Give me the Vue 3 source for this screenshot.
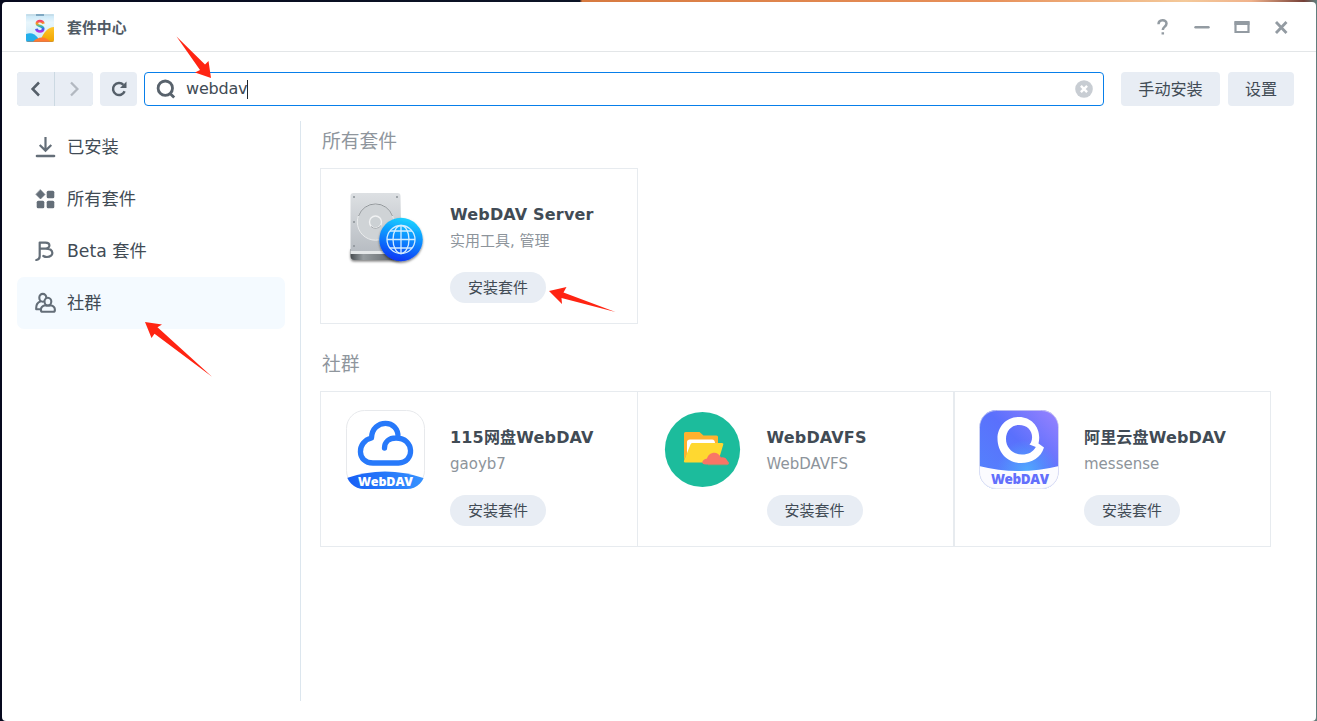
<script setup>
import { ref } from 'vue'

const query = ref('webdav')
const nav = [
  { id: 'installed', label: '已安装' },
  { id: 'all', label: '所有套件' },
  { id: 'beta', label: 'Beta 套件' },
  { id: 'community', label: '社群' },
]
const active = ref('community')
const sections = [
  { title: '所有套件', items: [{ icon: 'disk', name: 'WebDAV Server', sub: '实用工具, 管理' }] },
  {
    title: '社群',
    items: [
      { icon: 'cloud', name: '115网盘WebDAV', sub: 'gaoyb7' },
      { icon: 'folder', name: 'WebDAVFS', sub: 'WebDAVFS' },
      { icon: 'ring', name: '阿里云盘WebDAV', sub: 'messense' },
    ],
  },
]
</script>

<template>
  <div class="desktop">
    <div class="window">
      <header class="titlebar">
        <svg class="logo" width="28" height="28" viewBox="0 0 28 28">
          <defs>
            <linearGradient id="lgBag" x1="0" y1="0" x2="0" y2="1"><stop offset="0" stop-color="#c4e5f7" /><stop offset=".3" stop-color="#e9f6fc" /><stop offset="1" stop-color="#c9e8f8" /></linearGradient>
            <linearGradient id="lgS" x1="0" y1="0" x2="0" y2="1"><stop offset="0" stop-color="#f5426c" /><stop offset=".25" stop-color="#f9a01b" /><stop offset=".5" stop-color="#2fbdb0" /><stop offset=".75" stop-color="#365ff0" /><stop offset="1" stop-color="#b52be0" /></linearGradient>
            <linearGradient id="lgY" x1="0" y1="0" x2="0" y2="1"><stop offset="0" stop-color="#ffc62b" /><stop offset="1" stop-color="#f0a300" /></linearGradient>
            <clipPath id="bagClip"><path d="M0 0h28v26a2 2 0 0 1-2 2H2a2 2 0 0 1-2-2z" /></clipPath>
          </defs>
          <g clip-path="url(#bagClip)">
            <rect width="28" height="28" fill="url(#lgBag)" />
            <path d="M1 0h26l1 2H0z" fill="#c6deea" />
            <path d="M10 0h8v2h-8z" fill="#7fa8c2" />
            <path d="M15 25C18 18 22 13 28 13v15H15z" fill="url(#lgY)" />
            <path d="M0 20c5-2 9 0 12 4v4H0z" fill="#23aeea" />
            <path d="M7 28c4-6 14-6 17 0z" fill="#ff7a32" />
            <path d="M0 27h28v1H0z" fill="#bd7d55" opacity=".45" />
          </g>
          <path d="M17.400 9.700C16.600 6 10.700 6.400 10.900 9.500c.2 3.200 6.400 2 6.300 5.300-.1 3.600-6.200 3.600-6.800 0" fill="none" stroke="url(#lgS)" stroke-width="2.700" />
        </svg>
        <h1>套件中心</h1>
        <svg class="controls" width="140" height="24" viewBox="0 0 140 24" fill="none" stroke="#939ba2" stroke-width="2.6">
          <path d="M8.500 9.300C8.500 4.100 16.500 4 16.500 8.500c0 3.200-3.700 3-3.700 6.600M12.800 17.200v2.400" stroke-width="2.500" />
          <path d="M45.500 12.200h13" stroke-linecap="round" stroke-width="2.400" />
          <path d="M85.500 7.500h13v9.500h-13z" stroke-width="2.200" /><path d="M84.500 8h15" stroke-width="4" />
          <path d="M126 7l10.500 11M136.500 7L126 18" stroke-width="2.800" />
        </svg>
      </header>

      <div class="toolbar">
        <div class="history">
          <button aria-label="Back"><svg width="16" height="20" viewBox="0 0 16 20"><path d="M11 3.500L4.600 10l6.400 6.500" fill="none" stroke="#555f69" stroke-width="2.500" /></svg></button>
          <button aria-label="Forward"><svg width="16" height="20" viewBox="0 0 16 20"><path d="M5 3.500l6.400 6.500L5 16.500" fill="none" stroke="#b2b8c0" stroke-width="2.300" /></svg></button>
        </div>
        <button class="reload" aria-label="Reload"><svg width="20" height="20" viewBox="0 0 20 20"><path d="M15.600 12.300a6 6 0 1 1-1.200-6.400" fill="none" stroke="#555f69" stroke-width="2.500" /><path d="M17.500 2.600V9H11z" fill="#555f69" /></svg></button>
        <div class="search">
          <svg width="20" height="20" viewBox="0 0 20 20" fill="none" stroke="#58626c" stroke-width="2.800"><circle cx="9.300" cy="9.200" r="7.200" /><path d="M13.500 14l4.700 4.600" /></svg>
          <span class="query">{{ query }}</span><i class="caret"></i>
          <svg class="clear" width="18" height="18" viewBox="0 0 18 18"><circle cx="9" cy="9" r="8.800" fill="#c8cdd3" /><path d="M5.900 5.900l6.200 6.200m0-6.200l-6.200 6.200" stroke="#fff" stroke-width="2.400" /></svg>
        </div>
        <button class="manual">手动安装</button>
        <button class="settings">设置</button>
      </div>

      <div class="body">
        <nav>
          <a v-for="n in nav" :key="n.id" :class="{ active: active === n.id }" @click="active = n.id">
            <svg width="22" height="22" viewBox="0 0 22 22" fill="none" stroke="#646e78" stroke-width="2.200" stroke-linejoin="round" stroke-linecap="round">
              <g v-if="n.id === 'installed'" stroke-linecap="butt" stroke-linejoin="miter"><path d="M11.500 1v13M5.700 9l5.800 5.600L17.300 9" /><path d="M3 20h17" stroke-linecap="round" stroke-width="2.600" /></g>
              <g v-else-if="n.id === 'all'" fill="#646e78" stroke="none"><path d="M6.500 1.800l4.500 4.700L6.500 11 2 6.500z" stroke="#646e78" stroke-width=".6" /><rect x="12.700" y="2.700" width="7.600" height="7.600" rx="1.500" /><rect x="2.700" y="12.700" width="7.600" height="7.600" rx="1.500" /><rect x="12.700" y="12.700" width="7.600" height="7.600" rx="1.500" /></g>
              <path v-else-if="n.id === 'beta'" d="M2.300 20c2.400-.3 3.400-1.300 3.400-3.700V2.600h5.800c5.200 0 5.200 6 0 6H6M11.500 8.600c9 0 8.800 8.400 1.400 8.400-1.500 0-2.500-.3-3.600-1" />
              <g v-else stroke-width="2.100"><ellipse cx="8.800" cy="5.800" rx="3.500" ry="3.900" /><path d="M6.200 9.600C3.600 10.600 2.200 12.600 2.200 16v1.200h3.500" /><ellipse cx="13.900" cy="9.600" rx="3.400" ry="3.900" class="front" /><path class="front" d="M11.200 13.200c-3.200.6-4.300 2.400-4.300 4.700 0 1.300.5 1.800 1.700 1.800h10.700c1.200 0 1.600-.5 1.600-1.800 0-2.300-1.100-4.100-4.300-4.700-1.600.6-3.800.6-5.400 0z" /></g>
            </svg>
            <span>{{ n.label }}</span>
          </a>
        </nav>

        <main>
          <section v-for="s in sections" :key="s.title">
            <h2>{{ s.title }}</h2>
            <div class="cards">
              <article v-for="p in s.items" :key="p.name">
                <svg v-if="p.icon === 'disk'" width="80" height="80" viewBox="0 0 80 80">
                  <defs>
                    <linearGradient id="metal" x1="0" y1="0" x2="0" y2="1"><stop offset="0" stop-color="#dde0e3" /><stop offset="1" stop-color="#b8bdc3" /></linearGradient>
                    <linearGradient id="base" x1="0" y1="0" x2="1" y2="0"><stop offset="0" stop-color="#474d51" /><stop offset=".25" stop-color="#969ca0" /><stop offset="1" stop-color="#53595e" /></linearGradient>
                    <linearGradient id="globe" x1=".7" y1="0" x2=".45" y2="1"><stop offset="0" stop-color="#20d6ff" /><stop offset=".42" stop-color="#0896ff" /><stop offset="1" stop-color="#0838f5" /></linearGradient>
                    <filter id="soft" x="-20%" y="-20%" width="150%" height="150%"><feDropShadow dx="0" dy="1.500" stdDeviation="1.300" flood-opacity=".5" /></filter>
                  </defs>
                  <path d="M5.500 62h51v7a4 4 0 0 1-4 4h-43a4 4 0 0 1-4-4z" fill="url(#base)" filter="url(#soft)" />
                  <path d="M5.500 64h51v3h-51z" fill="#e4e7e9" />
                  <path d="M8.500 6h44a3 3 0 0 1 3 3l1 55h-51V9a3 3 0 0 1 3-3z" fill="url(#metal)" />
                  <circle cx="30.500" cy="35" r="18.200" fill="#cfd3d6" stroke="#eaeced" stroke-width="1" />
                  <path d="M13.500 29a18 18 0 0 1 34 0" fill="none" stroke="#93989c" />
                  <circle cx="30.500" cy="35" r="6" fill="#ccd1d4" stroke="#f1f2f3" stroke-width="1.400" /><path d="M26 39.500a6.500 6.500 0 0 0 10-1" fill="none" stroke="#a4a9ad" />
                  <g fill="#8b9297"><circle cx="9" cy="10" r="1" /><circle cx="52" cy="10" r="1" /><circle cx="9" cy="35" r="1" /><circle cx="9" cy="59" r="1" /></g>
                  <circle cx="56" cy="52.500" r="21.700" fill="url(#globe)" filter="url(#soft)" />
                  <g fill="none" stroke="#d4edff" stroke-width="1.300"><circle cx="56" cy="52.500" r="14" /><ellipse cx="56" cy="52.500" rx="8" ry="14" /><path d="M56 38.500v28M42 52.500h28M45 44h22M45 61h22" /></g>
                </svg>

                <svg v-else-if="p.icon === 'cloud'" width="80" height="80" viewBox="0 0 80 80">
                  <defs><clipPath id="tileClip"><rect x="1" y="0" width="79" height="79" rx="18" /></clipPath><linearGradient id="blue"><stop offset="0" stop-color="#165df5" /><stop offset="1" stop-color="#3793ff" /></linearGradient></defs>
                  <rect x="1.500" y=".5" width="78" height="78" rx="18" fill="#fff" stroke="#e7e9ec" />
                  <path d="M0 68.500Q40 54.500 80 68.500V80H0z" fill="url(#blue)" clip-path="url(#tileClip)" />
                  <path d="M39.500 38C39.500 32 44 28 51 28c19 0 19 25 2.500 25H28C11.500 53 11.500 31.500 26.500 28 27 8.500 54.500 8.500 53 28" fill="none" stroke="#2779fa" stroke-width="5.300" stroke-linecap="round" stroke-linejoin="round" />
                  <text x="40.500" y="75.500" text-anchor="middle" textLength="55" fill="#fff" class="badge small">WebDAV</text>
                </svg>

                <svg v-else-if="p.icon === 'folder'" width="80" height="80" viewBox="0 0 80 80">
                  <circle cx="40.500" cy="39.500" r="37.600" fill="#1cbc9c" />
                  <path d="M22 23.500q0-1.500 1.500-1.500h14l4 3.500h13q1.500 0 1.500 1.500V40H27l-5 10z" fill="#ffb12e" />
                  <path d="M25 32q0-2.500 3-2.500h22q3 0 3 4H31l-6 14z" fill="#fff" />
                  <path d="M30 33h30q1.800 0 1.300 1.500l-4.800 16q-.7 2-3 2H23q-1.700 0-1-2l6.500-16q.5-1.500 1.500-1.500z" fill="#ffd830" />
                  <path d="M44 54.500c-6 0-4-5 1-6 2-7 11-8 14-1 5-1 6 3 7 4 3 3-1 3-2 3z" fill="#f97566" /><path d="M46 54.700h19q2.500-.7 1-2.500" fill="none" stroke="#bd8c6b" stroke-width="1" />
                </svg>

                <svg v-else width="80" height="80" viewBox="0 0 80 80">
                  <defs><linearGradient id="violet" x1="0" y1="1" x2="1" y2="0"><stop offset="0" stop-color="#5286fd" /><stop offset=".55" stop-color="#5a70fc" /><stop offset="1" stop-color="#9a83ff" /></linearGradient><radialGradient id="glow" cx=".6" cy=".75" r=".38"><stop offset="0" stop-color="#50a8fe" /><stop offset="1" stop-color="#50a8fe" stop-opacity="0" /></radialGradient><clipPath id="aliClip"><rect x=".5" width="79" height="79" rx="17" /></clipPath></defs>
                  <g clip-path="url(#aliClip)"><path d="M0 0h80v80H0z" fill="url(#violet)" /><path d="M0 0h80v80H0z" fill="url(#glow)" /><path d="M0 56q40 10 80 0v24H0z" fill="#fbfbff" /></g>
                  <rect x=".5" y=".5" width="79" height="78" rx="17" fill="none" stroke="#dddfee" stroke-opacity=".65" />
                  <path d="M59.500 33.500C63 19 53.500 7 40 7 27 7 18.500 17 18.500 28.500 18.500 43 29 53 42 53c11 0 20-5.500 23-15.500zM40 15c10.500 0 15.500 9 12 17.500l-1.500 2 6.300 2.500C54 42 49.500 44.500 43 44.500 33.500 44.500 27 37.500 27 29c0-8 5.500-14 13-14z" fill="#fff" fill-rule="evenodd" />
                  <text x="41" y="74" text-anchor="middle" textLength="58" fill="#626ffc" class="badge">WebDAV</text>
                </svg>
                <div class="info">
                  <h3>{{ p.name }}</h3>
                  <p>{{ p.sub }}</p>
                  <button>安装套件</button>
                </div>
              </article>
            </div>
          </section>
        </main>
      </div>
    </div>

    <svg class="arrows" width="1317" height="721" viewBox="0 0 1317 721" fill="#ff2412">
      <path d="M176.500 36.500L205 64.500l3.500-3.500L211 78l-16-5.500 5-2.500z" />
      <path d="M145 322l17 2.500-4.500 2.800 54.500 49.500-57.500-43-3 4.200z" />
      <path d="M549 291l17.500-4-3 5.500 52 19.500-54-14 .5 6z" />
    </svg>
  </div>
</template>

<style scoped>
* { box-sizing: border-box; margin: 0; }
.desktop {
  position: relative; width: 1317px; height: 721px; overflow: hidden; padding: 2px 1px 0 2px;
  background: linear-gradient(90deg, #06091e 0, #0c1426 44%, #d77a40 44.2%, #e7905a 75%, #f4c99a 90%, #f0b28b 95%, #754038 99%, #608080 100%);
  font-family: "DejaVu Sans", "Noto Sans CJK SC", sans-serif; color: #414b55;
}
.window { height: 719px; background: #fff; border-radius: 4px; display: flex; flex-direction: column; }
.titlebar { height: 50px; border-bottom: 1px solid #e3e6e8; display: flex; align-items: center; padding: 2px 26px 0 24px; }
h1 { font-size: 14.9px; line-height: 24px; font-weight: 600; margin-left: 13px; color: #505a64; }
.controls { margin: -2px 0 0 auto; }
button { border: 0; background: #e8edf4; color: #414b55; font-family: inherit; padding: 0; display: flex; align-items: center; justify-content: center; }
.toolbar { display: flex; height: 34px; margin: 20px 22px 0 15px; }
.toolbar > * { border-radius: 4px; }
.history { display: flex; gap: 1px; width: 76px; margin-right: 7px; background: #ccd9e2; overflow: hidden; }
.history button { width: 37px; }
.history button + button { width: 38px; }
.reload { width: 37px; margin-right: 7px; }
.search { width: 960px; border: 1px solid #087fea; display: flex; align-items: center; padding: 0 10px 0 11px; margin-right: 17px; }
.query { font-size: 16px; line-height: 20px; margin-left: 10px; letter-spacing: -.2px; }
.caret { width: 1px; height: 19px; background: #20272d; }
.clear { margin-left: auto; }
.manual, .settings { font-size: 16.1px; width: 99px; padding-bottom: 2px; }
.settings { width: 66px; margin-left: 8px; }
.body { display: flex; margin-top: 15px; height: 580px; }
nav { width: 299px; padding: 0 15px; border-right: 1px solid #dce6ee; }
nav a { display: flex; align-items: center; height: 52px; padding-left: 17px; gap: 11px; border-radius: 7px; font-size: 17.25px; }
nav a span { line-height: 24px; }
nav a.active { background: #f4faff; }
.front { fill: #f4faff; }
main { padding-left: 19px; }
h2 { font-weight: 400; font-size: 18.8px; line-height: 28px; color: #8f969d; margin: 7px 0 12px 2px; }
section + section { margin-top: 26px; }
section + section h2 { padding-top: 1px; }
.cards { display: flex; }
article { width: 317.500px; height: 156px; border: 1px solid #e7ebef; display: flex; padding: 18px 0 0 24px; gap: 25px; }
article + article { margin-left: -1px; }
article:nth-child(3) { margin-left: 0; width: 317px; }
article svg { flex: none; }
.info { padding-top: 17px; }
h3 { font-size: 16px; line-height: 22px; height: 24px; letter-spacing: .17px; white-space: nowrap; }
p { font-size: 15px; line-height: 24px; height: 24px; padding-top: 1px; color: #8d949b; white-space: nowrap; }
.info button { width: 96px; height: 31px; border-radius: 16px; margin-top: 20px; font-size: 15px; padding-bottom: 2px; }
.badge { font: 800 13.500px "Open Sans", sans-serif; }
.badge.small { font-size: 12.500px; }
.arrows { position: absolute; left: 0; top: 0; pointer-events: none; }
</style>
